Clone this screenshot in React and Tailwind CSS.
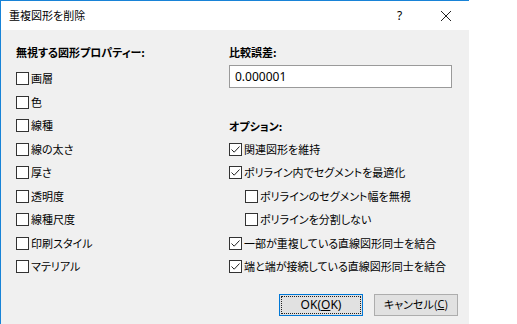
import React from "react";

const jp = "font-['Noto_Sans_CJK_JP',sans-serif] [font-feature-settings:'palt']";

const ignoreProps = ["画層", "色", "線種", "線の太さ", "厚さ", "透明度", "線種尺度", "印刷スタイル", "マテリアル"];

const options = [
  { label: "関連図形を維持", checked: true },
  { label: "ポリライン内でセグメントを最適化", checked: true },
  { label: "ポリラインのセグメント幅を無視", checked: false, sub: true },
  { label: "ポリラインを分割しない", checked: false, sub: true },
  { label: "一部が重複している直線図形同士を結合", checked: true },
  { label: "端と端が接続している直線図形同士を結合", checked: true },
];

function CheckBox({ checked }) {
  return (
    <span className="w-[13px] h-[13px] border border-[#333] bg-white flex items-center justify-center shrink-0">
      {checked && (
        <svg width="11" height="11" viewBox="0 0 11 11">
          <path d="M1.5 5.5 L4.2 8.2 L9.5 2.5" fill="none" stroke="#222" strokeWidth="1" />
        </svg>
      )}
    </span>
  );
}

function Row({ label, checked, sub }) {
  return (
    <div className={`h-[23.5px] flex items-center ${sub ? "pl-[16px]" : ""}`}>
      <CheckBox checked={checked} />
      <span className="ml-[2px] text-[11px] leading-none text-black">{label}</span>
    </div>
  );
}

export default function App() {
  return (
    <div className={`w-[517px] h-[324px] bg-white overflow-hidden ${jp}`}>
      <div className="w-[469px] h-full border-l border-t border-[#1883d7] flex flex-col">
        {/* Title bar */}
        <div className="h-[29px] bg-white flex items-center shrink-0">
          <span className="pl-[8px] text-[11px] text-black flex-1">重複図形を削除</span>
          <span className="text-[12px] text-black font-['Noto_Sans',sans-serif] w-[10px] mr-[33px]">?</span>
          <svg width="12" height="12" viewBox="0 0 12 12" className="mr-[17px]">
            <path d="M1 1 L11 11 M11 1 L1 11" stroke="#222" strokeWidth="1" />
          </svg>
        </div>

        {/* Body */}
        <div className="flex-1 bg-[#f0f0f0] pt-[10px] flex flex-col">
          <div className="flex">
            <div className="w-[228px] pl-[15px]">
              <div className="h-[24px] flex items-center text-[11px] font-bold text-black mb-[3px]">
                無視する図形プロパティー:
              </div>
              {ignoreProps.map((p) => (
                <Row key={p} label={p} checked={false} />
              ))}
            </div>
            <div className="flex-1 pr-[17px]">
              <div className="h-[24px] flex items-center text-[11px] font-bold text-black">比較誤差:</div>
              <div className="mt-[1px] h-[23px] bg-white border border-[#9a9a9a] flex items-center pl-[5px] text-[12px] font-['Noto_Sans',sans-serif] text-black">
                0.000001
              </div>
              <div className="mt-[26px] h-[23.5px] flex items-center text-[11px] font-bold text-black">オプション:</div>
              {options.map((o) => (
                <Row key={o.label} {...o} />
              ))}
            </div>
          </div>

          <div className="mt-[15px] flex justify-end pr-[11px] gap-[11px]">
            <button className="w-[84px] h-[22px] bg-[#e1e1e1] border border-[#0078d7] p-[1px]">
              <span className="w-full h-full border border-dotted border-[#222] flex items-center justify-center text-[12px] text-black font-['Noto_Sans',sans-serif]">
                OK(<span className="underline">O</span>K)
              </span>
            </button>
            <button className="w-[84px] h-[22px] bg-[#e1e1e1] border border-[#adadad] flex items-center justify-center text-[11px] text-black">
              キャンセル(<span className="underline font-['Noto_Sans',sans-serif]">C</span>)
            </button>
          </div>
        </div>
      </div>
    </div>
  );
}
